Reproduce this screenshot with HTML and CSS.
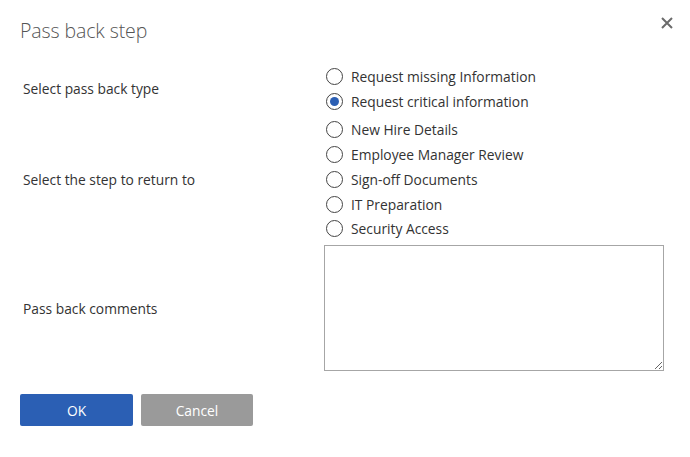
FILE: index.html
```html
<!DOCTYPE html>
<html>
<head>
<meta charset="utf-8">
<link rel="stylesheet" href="styles.css">
</head>
<body>
<div class="dialog">
  <div class="header">
    <h1 class="title">Pass back step</h1>
    <button class="close" aria-label="Close">
      <svg width="12" height="12" viewBox="0 0 12 12"><path d="M1 1L11 11M11 1L1 11" stroke="#6b6b6b" stroke-width="2" fill="none"/></svg>
    </button>
  </div>
  <div class="form">
    <div class="label">Select pass back type</div>
    <div class="group">
      <label class="radio"><span class="circle"></span>Request missing Information</label>
      <label class="radio"><span class="circle checked"></span>Request critical information</label>
    </div>
    <div class="label">Select the step to return to</div>
    <div class="group">
      <label class="radio"><span class="circle"></span>New Hire Details</label>
      <label class="radio"><span class="circle"></span>Employee Manager Review</label>
      <label class="radio"><span class="circle"></span>Sign-off Documents</label>
      <label class="radio"><span class="circle"></span>IT Preparation</label>
      <label class="radio"><span class="circle"></span>Security Access</label>
    </div>
    <div class="label">Pass back comments</div>
    <div class="group">
      <textarea class="comments"></textarea>
    </div>
  </div>
  <div class="buttons">
    <button class="btn ok">OK</button>
    <button class="btn cancel">Cancel</button>
  </div>
</div>
</body>
</html>
```
FILE: styles.css
```css
* { box-sizing: border-box; }
html, body { margin: 0; padding: 0; background: #fff; }
body {
  font-family: "Open Sans", "Noto Sans", sans-serif;
  color: #333;
  width: 690px;
  height: 457px;
  overflow: hidden;
}
.dialog { padding: 0 0 0 20px; }
.header {
  display: flex;
  justify-content: space-between;
  align-items: flex-start;
  height: 64px;
}
.title {
  margin: 18px 0 0 0;
  font-size: 19.5px;
  font-weight: 300;
  color: #555;
  line-height: 26px;
  letter-spacing: -0.1px;
}
.close {
  border: 0;
  background: none;
  padding: 0;
  margin: 17px 17px 0 0;
  width: 12px;
  height: 12px;
  display: block;
}
.close svg { display: block; }
.form {
  display: grid;
  grid-template-columns: 304px 340px;
  align-items: center;
  row-gap: 4px;
}
.label {
  font-size: 13.8px;
  padding-left: 3px;
  color: #333;
}
.group { display: flex; flex-direction: column; }
.radio {
  display: flex;
  align-items: center;
  height: 24.75px;
  font-size: 13.8px;
  color: #333;
  padding-left: 2px;
}
.circle {
  width: 17px;
  height: 17px;
  border: 1px solid #444;
  border-radius: 50%;
  margin-right: 8px;
  display: flex;
  align-items: center;
  justify-content: center;
  flex: none;
}
.circle.checked::after {
  content: "";
  width: 9px;
  height: 9px;
  border-radius: 50%;
  background: #2b5fb4;
}
.comments {
  display: block;
  width: 340px;
  height: 126px;
  border: 1px solid #a6a6a6;
  resize: both;
  margin: 0;
  font-family: inherit;
}
.buttons {
  display: flex;
  gap: 8px;
  margin-top: 23px;
}
.btn {
  width: 113px;
  height: 32px;
  border: 0;
  border-radius: 2px;
  font-family: inherit;
  font-size: 13.8px;
  color: #fff;
  padding: 0;
}
.ok { background: #2b5fb4; }
.cancel { background: #9a9a9a; width: 112px; }
```
